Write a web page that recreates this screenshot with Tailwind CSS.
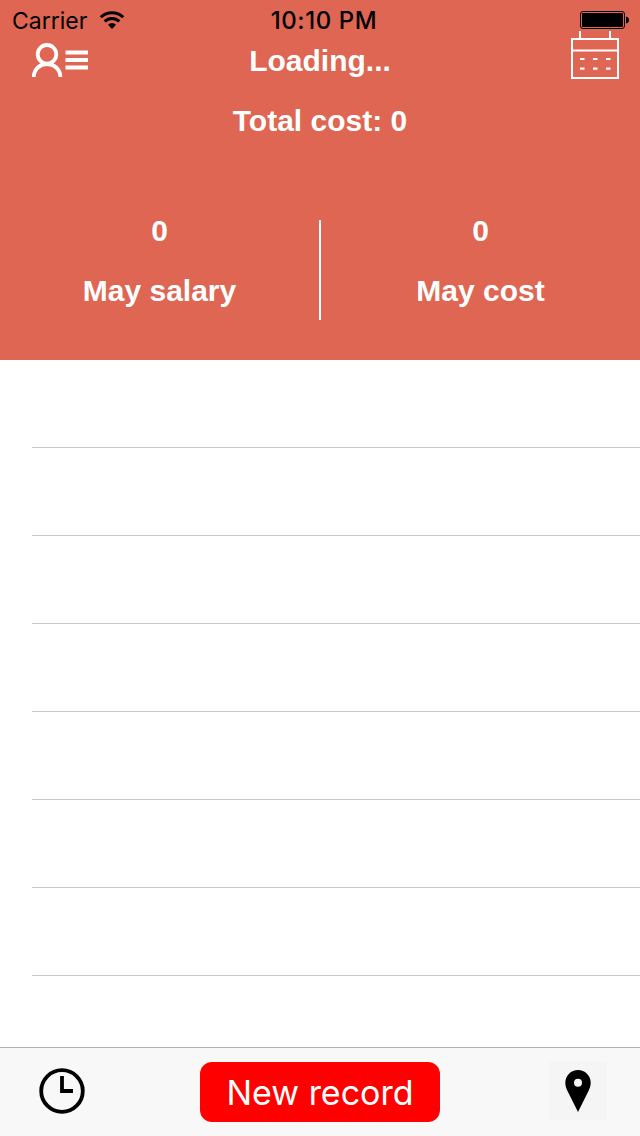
<!DOCTYPE html>
<html lang="en">
<head>
<meta charset="utf-8">
<meta name="viewport" content="width=device-width, initial-scale=1">
<title>Records</title>
<script src="https://cdn.jsdelivr.net/npm/@tailwindcss/browser@4"></script>
</head>
<body class="flex min-h-screen flex-col bg-white font-['Inter',sans-serif]">
<header class="bg-[#de6652] pb-12 text-white">
  <div class="grid h-10 grid-cols-3 grid-rows-[40px] items-center pl-3 pr-1 text-black">
    <div class="flex items-center gap-3">
      <span class="pt-0.5 text-[23px] leading-9">Carrier</span>
      <svg class="h-[18px] w-[26px]" viewBox="0 0 26 18" fill="none" stroke="#000" stroke-width="3" aria-label="Wi-Fi">
        <path d="M1.800 6.200a16 16 0 0 1 22.400 0M5.700 10.400a10.400 10.400 0 0 1 14.600 0"/>
        <path d="M13 18l-4-4.200a5.600 5.600 0 0 1 8 0z" fill="#000" stroke="none"/>
      </svg>
    </div>
    <time class="whitespace-nowrap pt-0.5 text-center text-2xl font-medium tracking-wide">10:10 PM</time>
    <svg class="mr-[7px] h-5 w-[50px] justify-self-end" viewBox="0 0 50 20" aria-label="Battery full">
      <rect x="1.500" y="1.500" width="44" height="17" rx="2.500" fill="none" stroke="#000"/>
      <rect x="3" y="3" width="41" height="14" rx="1" fill="#000"/>
      <path d="M47 6.500q3 .5 3 3.500t-3 3.500z" fill="#000"/>
    </svg>
  </div>
  <div class="grid h-10 grid-cols-[1fr_auto_1fr] grid-rows-[40px] items-end px-5 font-['Liberation_Sans',sans-serif]">
    <button type="button" class="ml-3 h-10 w-[57px]" aria-label="Profile menu">
      <svg class="h-10 w-[57px]" viewBox="0 0 57 40" fill="none" stroke="#fff" stroke-width="3.800">
        <circle cx="15" cy="14.300" r="9.300"/>
        <path d="M1.800 37C2 29 8 24 15 24s13.200 5 13.400 13M33.500 12.500H56M33.500 20H56M33.500 27.500H56"/>
      </svg>
    </button>
    <h1 class="pt-0.5 text-[30px] leading-[38px] font-bold">Loading...</h1>
    <button type="button" class="h-[50px] w-[57px] justify-self-end" aria-label="Calendar">
      <svg class="ml-auto h-[50px] w-[50px]" viewBox="0 0 50 50" fill="none" stroke="#fff" stroke-width="2">
        <path d="M2 9H48V48H2zM2 20.500H48M10 1V9M40 1V9"/>
        <path d="M10 29h4.500M23 29h4.500M36 29h4.500M10 38.700h4.500M23 38.700h4.500M36 38.700h4.500" stroke-width="2.200"/>
      </svg>
    </button>
  </div>
  <p class="mt-[21px] text-center font-['Liberation_Sans',sans-serif] text-[30px] leading-10 font-bold">Total cost: 0</p>
  <div class="mt-[70px] grid grid-cols-[1fr_2px_1fr] text-center font-['Liberation_Sans',sans-serif] text-[30px] leading-10 font-bold">
    <div class="flex flex-col gap-5"><span>0</span><span>May salary</span></div>
    <div class="mt-[9px] -mb-[9px] w-0.5 bg-white"></div>
    <div class="flex flex-col gap-5"><span>0</span><span>May cost</span></div>
  </div>
  <div class="h-px"></div>
</header>
<main class="grow pl-8">
  <ul>
    <li class="h-22 border-b border-[#c8c7cc]"></li>
    <li class="h-22 border-b border-[#c8c7cc]"></li>
    <li class="h-22 border-b border-[#c8c7cc]"></li>
    <li class="h-22 border-b border-[#c8c7cc]"></li>
    <li class="h-22 border-b border-[#c8c7cc]"></li>
    <li class="h-22 border-b border-[#c8c7cc]"></li>
    <li class="h-22 border-b border-[#c8c7cc]"></li>
  </ul>
</main>
<footer class="grid grid-cols-[1fr_auto_1fr] items-center border-t border-[#b2b2b2] bg-[#f8f8f8] px-8 py-3.5">
  <button type="button" class="flex size-[60px] items-center justify-center pb-0.5" aria-label="History">
    <svg class="size-[46px]" viewBox="0 0 46 46" fill="none" stroke="#000">
      <circle cx="23" cy="23" r="20.800" stroke-width="3.800"/>
      <path d="M23 8V23H34" stroke-width="3.800"/>
    </svg>
  </button>
  <button type="button" class="h-[60px] w-60 rounded-xl bg-[#ff0000] text-[34px] text-white">New record</button>
  <button type="button" class="mr-px mb-0.5 flex size-[58px] items-center justify-center justify-self-end bg-[#f5f5f5]" aria-label="Location">
    <svg class="h-[42px] w-[26px]" viewBox="0 0 26 42">
      <path fill-rule="evenodd" d="M13 0A12.700 12.700 0 0 0 .3 12.700C.3 16 1.500 19 3 22L13 42 23 22C24.500 19 25.700 16 25.700 12.700A12.700 12.700 0 0 0 13 0ZM13 8.700a4 4 0 1 1 0 8 4 4 0 0 1 0-8Z"/>
    </svg>
  </button>
</footer>
</body>
</html>
